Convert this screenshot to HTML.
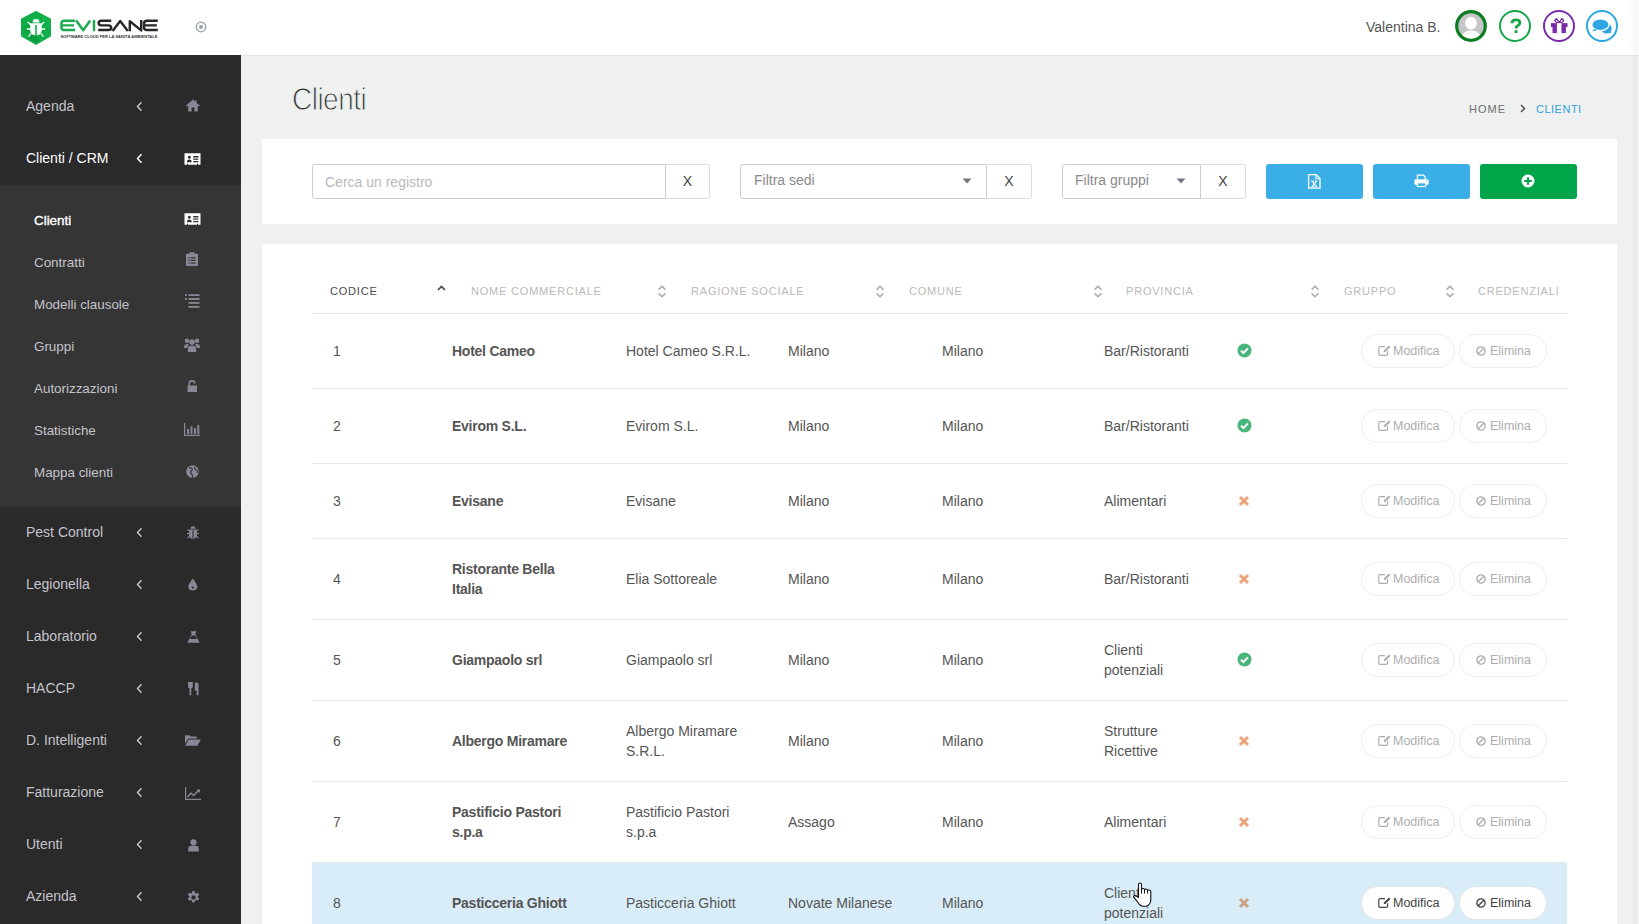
<!DOCTYPE html>
<html><head><meta charset="utf-8">
<style>
*{margin:0;padding:0;box-sizing:border-box}
html,body{width:1639px;height:924px;overflow:hidden;background:#eff1f0;font-family:"Liberation Sans",sans-serif;position:relative}
.abs{position:absolute}
#hdr{position:absolute;left:0;top:0;width:1639px;height:55px;background:#fff}
#side{position:absolute;left:0;top:55px;width:241px;height:869px;background:#2a2a2a}
#sub{position:absolute;left:0;top:185px;width:241px;height:322px;background:#353535}
.mi{position:absolute;left:26px;font-size:14px;color:#c4c3cc;line-height:20px;white-space:nowrap}
.si{position:absolute;left:34px;font-size:13.4px;color:#c4c3cc;line-height:20px;white-space:nowrap}
.panel{position:absolute;background:#fff}
.th{position:absolute;font-size:11px;letter-spacing:0.8px;color:#b9b9b9;line-height:16px;white-space:nowrap}
.td{position:absolute;font-size:14px;color:#555;line-height:20px;white-space:nowrap}
.b{font-weight:bold;color:#555;letter-spacing:-0.25px}
.rl{position:absolute;left:312px;width:1255px;height:1px;background:#e8e8e8}
.btnr{position:absolute;height:34px;border:1px solid #eeeeee;border-radius:17px;font-size:12.5px;color:#adadad;line-height:32px;white-space:nowrap;background:#fff}
.inp{position:absolute;border:1px solid #ccc;background:#fff}
.xb{position:absolute;border:1px solid #ddd;border-left:0;background:#fff;border-radius:0 3px 3px 0;font-size:14px;color:#444;text-align:center;line-height:33px}
.pb{position:absolute;top:164px;height:35px;width:97px;border-radius:3px}
</style></head><body>

<div id="hdr"></div>
<svg class="abs" style="left:0;top:0;width:60px;height:50px" viewBox="0 0 60 50"><path d="M36 12.6L49.5 19.6V35.4L36 43.2L22.5 35.4V19.6z" fill="#10ae48" stroke="#10ae48" stroke-width="3" stroke-linejoin="round"/><path d="M22 28L31 20L36 25L28 34z" fill="#089a3a" opacity=".55"/><path d="M28 38L34 33L40 40L36 43.5z" fill="#07913a" opacity=".6"/><path d="M40 14L50 20V27L44 22z" fill="#15b850" opacity=".5"/><g fill="#fff"><path d="M32.6 22.4A3.45 3.45 0 0 1 39.5 22.4z"/><path d="M30.2 23.3H41.7V30Q41.7 35.3 36 35.3Q30.2 35.3 30.2 30z"/></g><rect x="35.2" y="25" width="1.6" height="10.3" fill="#10ae48"/><path d="M27.8 22L31 25.2M44.2 22L41 25.2M26.8 29H30.8M45.2 29H41.2M28.5 36.6L31.2 33.4M43.5 36.6L40.8 33.4" stroke="#fff" stroke-width="1.3"/></svg>
<svg class="abs" style="left:0;top:0;width:170px;height:45px" viewBox="0 0 170 45" fill="none" stroke-width="2.4" stroke-linejoin="round"><g stroke="#1aa94c"><path d="M75.2 20.8H64.2Q61.4 20.8 61.4 23.6V27.2Q61.4 30 64.2 30H75.2M62.2 25.4H74.2"/><path d="M76.2 20.5L83.2 30.2L90.2 20.5"/><path d="M94 20V31.2"/></g><g stroke="#262626"><path d="M111.2 20.8H101.4Q98.6 20.8 98.6 23.1Q98.6 25.4 101.4 25.4H108.4Q111.2 25.4 111.2 27.7Q111.2 30 108.4 30H98.2"/><path d="M112.6 31L120.2 21L127.8 31"/><path d="M129.8 31.2V21.2L141.2 30.4V20"/><path d="M157.8 20.8H146.8Q144 20.8 144 23.6V27.2Q144 30 146.8 30H157.8M144.8 25.4H156.8"/></g><text x="60.4" y="37.9" font-family="Liberation Sans" font-weight="bold" font-size="4.2" fill="#333" stroke="none" textLength="97" lengthAdjust="spacingAndGlyphs">SOFTWARE CLOUD PER LA SANITÀ AMBIENTALE</text></svg>
<svg class="abs" style="left:195px;top:21px;width:12px;height:12px" viewBox="0 0 12 12"><circle cx="6" cy="6" r="4.8" fill="none" stroke="#9aa0a8" stroke-width="1.3"/><circle cx="6" cy="6" r="2" fill="#9aa0a8"/></svg>
<div class="abs" style="left:1366px;top:18px;font-size:14px;color:#555;line-height:18px;white-space:nowrap">Valentina B.</div>
<svg class="abs" style="left:1455px;top:10px;width:32px;height:32px" viewBox="0 0 32 32"><clipPath id="avc"><circle cx="16" cy="16" r="14"/></clipPath><circle cx="16" cy="16" r="14.5" fill="#c6c6ca"/><g clip-path="url(#avc)" fill="#fff"><ellipse cx="16" cy="13.2" rx="5.9" ry="6.4"/><ellipse cx="16" cy="29" rx="10.5" ry="8.5"/></g><circle cx="16" cy="16" r="14.3" fill="none" stroke="#0a7d1f" stroke-width="3.2"/></svg>
<svg class="abs" style="left:1499px;top:10px;width:32px;height:32px" viewBox="0 0 32 32"><circle cx="16" cy="16" r="15" fill="none" stroke="#17a64a" stroke-width="2"/><path d="M12.9 13.2Q12.9 9.9 16.9 9.9Q20.8 9.9 20.8 12.8Q20.8 14.7 18.7 15.8Q17.1 16.6 17.1 18.6" fill="none" stroke="#17a64a" stroke-width="2.9"/><rect x="15.6" y="20.2" width="2.9" height="2.8" fill="#17a64a"/></svg>
<svg class="abs" style="left:1543px;top:10px;width:32px;height:32px" viewBox="0 0 32 32"><circle cx="16" cy="16" r="15" fill="none" stroke="#7a2ca8" stroke-width="2"/><g fill="#7a2ca8"><rect x="8" y="13.1" width="16.5" height="3.9"/><rect x="9.5" y="17" width="13.4" height="6.1"/></g><path d="M16.2 12.6L13.6 8.6L11.6 10.4L13.6 12.6z M16.2 12.6L18.8 8.6L20.8 10.4L18.8 12.6z" fill="none" stroke="#7a2ca8" stroke-width="1.3" stroke-linejoin="round"/><rect x="13.9" y="13.1" width="4.6" height="10" fill="#fff"/></svg>
<svg class="abs" style="left:1586px;top:10px;width:32px;height:32px" viewBox="0 0 32 32"><circle cx="16" cy="16" r="15" fill="none" stroke="#2ea6e2" stroke-width="2"/><g fill="#2ea6e2"><ellipse cx="20.5" cy="18.6" rx="5.2" ry="5"/><path d="M22 22l3.6 1.8-1.8-3.5z"/><ellipse cx="14.4" cy="14.7" rx="8.6" ry="5.9" stroke="#fff" stroke-width="1.3"/><path d="M8.4 18.8L6.2 21.4L11.4 19.9z"/></g></svg>
<div id="side"></div><div id="sub"></div>
<div class="mi" style="top:96px;color:#c4c3cc">Agenda</div>
<svg class="abs" style="left:135px;top:101px;width:9px;height:11px" viewBox="0 0 9 11"><path d="M6.5 1.2L2.5 5.5l4 4.3" fill="none" stroke="#c4c3cc" stroke-width="1.5"/></svg>
<div class="mi" style="top:148px;color:#ffffff">Clienti / CRM</div>
<svg class="abs" style="left:135px;top:153px;width:9px;height:11px" viewBox="0 0 9 11"><path d="M6.5 1.2L2.5 5.5l4 4.3" fill="none" stroke="#ffffff" stroke-width="1.5"/></svg>
<div class="mi" style="top:522px">Pest Control</div>
<svg class="abs" style="left:135px;top:527px;width:9px;height:11px" viewBox="0 0 9 11"><path d="M6.5 1.2L2.5 5.5l4 4.3" fill="none" stroke="#c4c3cc" stroke-width="1.5"/></svg>
<div class="mi" style="top:574px">Legionella</div>
<svg class="abs" style="left:135px;top:579px;width:9px;height:11px" viewBox="0 0 9 11"><path d="M6.5 1.2L2.5 5.5l4 4.3" fill="none" stroke="#c4c3cc" stroke-width="1.5"/></svg>
<div class="mi" style="top:626px">Laboratorio</div>
<svg class="abs" style="left:135px;top:631px;width:9px;height:11px" viewBox="0 0 9 11"><path d="M6.5 1.2L2.5 5.5l4 4.3" fill="none" stroke="#c4c3cc" stroke-width="1.5"/></svg>
<div class="mi" style="top:678px">HACCP</div>
<svg class="abs" style="left:135px;top:683px;width:9px;height:11px" viewBox="0 0 9 11"><path d="M6.5 1.2L2.5 5.5l4 4.3" fill="none" stroke="#c4c3cc" stroke-width="1.5"/></svg>
<div class="mi" style="top:730px">D. Intelligenti</div>
<svg class="abs" style="left:135px;top:735px;width:9px;height:11px" viewBox="0 0 9 11"><path d="M6.5 1.2L2.5 5.5l4 4.3" fill="none" stroke="#c4c3cc" stroke-width="1.5"/></svg>
<div class="mi" style="top:782px">Fatturazione</div>
<svg class="abs" style="left:135px;top:787px;width:9px;height:11px" viewBox="0 0 9 11"><path d="M6.5 1.2L2.5 5.5l4 4.3" fill="none" stroke="#c4c3cc" stroke-width="1.5"/></svg>
<div class="mi" style="top:834px">Utenti</div>
<svg class="abs" style="left:135px;top:839px;width:9px;height:11px" viewBox="0 0 9 11"><path d="M6.5 1.2L2.5 5.5l4 4.3" fill="none" stroke="#c4c3cc" stroke-width="1.5"/></svg>
<div class="mi" style="top:886px">Azienda</div>
<svg class="abs" style="left:135px;top:891px;width:9px;height:11px" viewBox="0 0 9 11"><path d="M6.5 1.2L2.5 5.5l4 4.3" fill="none" stroke="#c4c3cc" stroke-width="1.5"/></svg>
<div class="si" style="top:211px;color:#ffffff;font-weight:normal;-webkit-text-stroke:0.35px #fff">Clienti</div>
<div class="si" style="top:253px;color:#c4c3cc;font-weight:normal">Contratti</div>
<div class="si" style="top:295px;color:#c4c3cc;font-weight:normal">Modelli clausole</div>
<div class="si" style="top:337px;color:#c4c3cc;font-weight:normal">Gruppi</div>
<div class="si" style="top:379px;color:#c4c3cc;font-weight:normal">Autorizzazioni</div>
<div class="si" style="top:421px;color:#c4c3cc;font-weight:normal">Statistiche</div>
<div class="si" style="top:463px;color:#c4c3cc;font-weight:normal">Mappa clienti</div>
<svg class="abs" style="left:186px;top:99px;width:14px;height:13px" viewBox="0 0 14 13" fill="#8a8794"><path d="M7 0.5L0 6.6l0.9 1L2.2 6.5V12.5H5.6V8.6h2.8v3.9h3.4V6.5l1.3 1.1 0.9-1L10.6 3.9V1.2H9.2v1.5z"/></svg>
<svg class="abs" style="left:184px;top:153px;width:17px;height:12px" viewBox="0 0 17 12" fill="#ffffff"><path fill-rule="evenodd" d="M0.5 0.3h16v11.4h-16z M3 9.3h4.6V8.2Q7.6 6.5 5.3 6.5Q3 6.5 3 8.2z M5.3 2.8a1.5 1.5 0 1 0 0.01 0z M9.2 3.1h5.2v1.3H9.2z M9.2 5.5h5.2v1.3H9.2z M9.2 7.9h5.2v1.3H9.2z M3 11.7h1v-1h-1z M13 11.7h1v-1h-1z"/></svg>
<svg class="abs" style="left:184px;top:213px;width:17px;height:12px" viewBox="0 0 17 12" fill="#ffffff"><path fill-rule="evenodd" d="M0.5 0.3h16v11.4h-16z M3 9.3h4.6V8.2Q7.6 6.5 5.3 6.5Q3 6.5 3 8.2z M5.3 2.8a1.5 1.5 0 1 0 0.01 0z M9.2 3.1h5.2v1.3H9.2z M9.2 5.5h5.2v1.3H9.2z M9.2 7.9h5.2v1.3H9.2z M3 11.7h1v-1h-1z M13 11.7h1v-1h-1z"/></svg>
<svg class="abs" style="left:186px;top:252px;width:12px;height:14px" viewBox="0 0 12 14" fill="#8a8794"><path fill-rule="evenodd" d="M0 1.8h3.6V0.3h4.8v1.5H12V14H0z M2.4 5.2h1.3v1.3H2.4z M4.8 5.2h4.8v1.3H4.8z M2.4 7.8h1.3v1.3H2.4z M4.8 7.8h4.8v1.3H4.8z M2.4 10.4h1.3v1.3H2.4z M4.8 10.4h4.8v1.3H4.8z"/></svg>
<svg class="abs" style="left:185px;top:294px;width:15px;height:14px" viewBox="0 0 15 14" fill="#8a8794"><path d="M0 0.3h1.8v1.8H0z M3.5 0.3h11v1.8h-11z M0 4.1h1.8v1.8H0z M3.5 4.1h11v1.8h-11z M3.5 8h11v1.8h-11z M3.5 11.9h11v1.8h-11z"/></svg>
<svg class="abs" style="left:184px;top:338px;width:16px;height:14px" viewBox="0 0 16 14" fill="#8a8794"><circle cx="3" cy="2.8" r="2.2"/><circle cx="13" cy="2.8" r="2.2"/><circle cx="8" cy="4" r="2.8"/><path d="M0 9.5Q0 6 3 6Q4.5 6 5 6.8Q3.5 8 3.5 10H0z M16 9.5Q16 6 13 6Q11.5 6 11 6.8Q12.5 8 12.5 10H16z M3.8 14V11.5Q3.8 7.5 8 7.5Q12.2 7.5 12.2 11.5V14z"/></svg>
<svg class="abs" style="left:187px;top:380px;width:11px;height:12px" viewBox="0 0 11 12" fill="#8a8794"><path d="M0.5 5.5h9.5v6.5H0.5z"/><path d="M2.3 5.8V3.4Q2.3 0.9 5 0.9Q7.7 0.9 7.7 3.4" fill="none" stroke="#8a8794" stroke-width="1.6"/></svg>
<svg class="abs" style="left:184px;top:423px;width:16px;height:13px" viewBox="0 0 16 13" fill="#8a8794"><path d="M0 0h1.2v11.8H16V13H0z M3 6h2v5H3z M6.5 3.5h2V11h-2z M10 5h2v6h-2z M13.3 2h2v9h-2z"/></svg>
<svg class="abs" style="left:186px;top:465px;width:13px;height:13px" viewBox="0 0 13 13" fill="#8a8794"><circle cx="6.5" cy="6.5" r="6.3"/><path d="M3 3Q5 2 6 4Q7 5 5 6Q4 8 6 9.5L7 12.5 M9 2Q8 4 10 5Q12 5.5 11.5 8" fill="none" stroke="#353535" stroke-width="1.2"/></svg>
<svg class="abs" style="left:187px;top:526px;width:12px;height:13px" viewBox="0 0 12 13" fill="#8a8794"><path d="M3.5 2.8Q3.5 0.3 6 0.3Q8.5 0.3 8.5 2.8z M2.8 3.6h6.4Q10 4.4 10 6.5V9Q10 12.8 6 12.8Q2 12.8 2 9V6.5Q2 4.4 2.8 3.6z"/><path d="M0.5 3.5L2.5 5 M11.5 3.5L9.5 5 M0 7.5H2 M12 7.5H10 M0.5 12L2.5 10.3 M11.5 12L9.5 10.3" stroke="#8a8794" stroke-width="1.1"/><path d="M6 4.2V12.3" stroke="#2a2a2a" stroke-width="1"/></svg>
<svg class="abs" style="left:188px;top:578px;width:10px;height:13px" viewBox="0 0 10 13" fill="#8a8794"><path d="M4.8 0.5Q9.3 6.5 9.3 8.3Q9.3 12.5 4.8 12.5Q0.3 12.5 0.3 8.3Q0.3 6.5 4.8 0.5z"/><circle cx="4.8" cy="9.6" r="1.1" fill="#2a2a2a"/></svg>
<svg class="abs" style="left:187px;top:631px;width:13px;height:12px" viewBox="0 0 13 12" fill="#8a8794"><path d="M3.6 0.2h5.8v1.2h-0.9v2.4L12.7 11.8H0.3L4.5 3.8V1.4h-0.9z"/><path d="M4.8 4.5L2.8 8H10.2L8.2 4.5z" fill="#2a2a2a"/></svg>
<svg class="abs" style="left:188px;top:682px;width:11px;height:14px" viewBox="0 0 11 14" fill="#8a8794"><path d="M0 0h4.8v4.6Q4.8 6 3.3 6.4V13.3H1.5V6.4Q0 6 0 4.6z M6.8 0.5Q9.8 0.5 10.5 1.5V13.3H8.6V8.6H6.8z"/></svg>
<svg class="abs" style="left:185px;top:735px;width:16px;height:11px" viewBox="0 0 16 11" fill="#8a8794"><path d="M0 0.3h4.6l1.3 1.3h5.8v1.8H3.2L0 8.8z M3.6 4.4H15.8L12.4 10.8H0.3z"/></svg>
<svg class="abs" style="left:185px;top:787px;width:16px;height:13px" viewBox="0 0 16 13" fill="#8a8794"><path d="M0 0h1.2v11.8H16V13H0z"/><path d="M2.5 10L6 6L8.5 8.5L13.5 3.5" fill="none" stroke="#8a8794" stroke-width="1.5"/><path d="M11.5 2.5H15V6z"/></svg>
<svg class="abs" style="left:188px;top:839px;width:11px;height:13px" viewBox="0 0 11 13" fill="#8a8794"><circle cx="5.5" cy="3.3" r="3.1"/><path d="M0.2 12.6V10Q0.2 6.8 3.3 6.8H7.7Q10.8 6.8 10.8 10V12.6z"/></svg>
<svg class="abs" style="left:187px;top:891px;width:13px;height:13px" viewBox="0 0 13 13" fill="#8a8794"><path fill-rule="evenodd" d="M5.3 0h2.4l0.4 1.9 1.1 0.6 1.8-0.7 1.2 2.1-1.4 1.2v1.3l1.4 1.2-1.2 2.1-1.8-0.7-1.1 0.6-0.4 1.9H5.3l-0.4-1.9-1.1-0.6-1.8 0.7-1.2-2.1 1.4-1.2V5.1L0.8 3.9 2 1.8l1.8 0.7 1.1-0.6z M6.5 4.3a2.2 2.2 0 1 0 0.01 0z"/></svg>
<div class="abs" style="left:292px;top:81px;font-size:32px;color:#333;line-height:36px;letter-spacing:-0.6px;white-space:nowrap;-webkit-text-stroke:1px #eff1f0;transform:scaleX(0.875);transform-origin:0 0">Clienti</div>
<div class="abs" style="left:1469px;top:102px;font-size:11px;color:#6e6e6e;letter-spacing:1px;line-height:14px;white-space:nowrap">HOME</div>
<svg class="abs" style="left:1519px;top:104px;width:8px;height:9px" viewBox="0 0 8 9"><path d="M2 1l3.5 3.5L2 8" fill="none" stroke="#555" stroke-width="1.6"/></svg>
<div class="abs" style="left:1536px;top:102px;font-size:11px;color:#2f9fe0;letter-spacing:0.5px;line-height:14px;white-space:nowrap">CLIENTI</div>
<div class="panel" style="left:262px;top:139px;width:1355px;height:85px"></div>
<div class="inp" style="left:312px;top:164px;width:354px;height:35px;border-radius:3px 0 0 3px"></div>
<div class="abs" style="left:325px;top:173px;font-size:14px;color:#b9b9b9;line-height:18px;white-space:nowrap">Cerca un registro</div>
<div class="xb" style="left:666px;top:164px;width:44px;height:35px">X</div>
<div class="inp" style="left:740px;top:164px;width:247px;height:35px;border-radius:3px 0 0 3px"></div>
<div class="abs" style="left:754px;top:171px;font-size:14px;color:#8a8a8a;line-height:18px;white-space:nowrap">Filtra sedi</div>
<svg class="abs" style="left:962px;top:178px;width:10px;height:6px" viewBox="0 0 10 6"><path d="M0.5 0.5h9L5 5.5z" fill="#76737f"/></svg>
<div class="xb" style="left:987px;top:164px;width:45px;height:35px">X</div>
<div class="inp" style="left:1062px;top:164px;width:139px;height:35px;border-radius:3px 0 0 3px"></div>
<div class="abs" style="left:1075px;top:171px;font-size:14px;color:#8a8a8a;line-height:18px;white-space:nowrap">Filtra gruppi</div>
<svg class="abs" style="left:1176px;top:178px;width:10px;height:6px" viewBox="0 0 10 6"><path d="M0.5 0.5h9L5 5.5z" fill="#76737f"/></svg>
<div class="xb" style="left:1201px;top:164px;width:45px;height:35px">X</div>
<div class="pb" style="left:1266px;background:#3aaee6"></div>
<svg class="abs" style="left:1307px;top:174px;width:15px;height:15px" viewBox="0 0 15 15"><path d="M1.6 0.7h7.6l3.8 3.8v9.6H1.6z" fill="none" stroke="#fff" stroke-width="1.3"/><path d="M9 0.7v4h4" fill="none" stroke="#fff" stroke-width="1.1"/><path d="M4.2 6.6h2.6v0.9h-0.6l1.1 1.6 1.1-1.6h-0.6V6.6h2.5v0.9h-0.6L8.1 10l1.7 2.3h0.6v0.9H7.8v-0.9h0.5l-1-1.5-1 1.5h0.5v0.9H4.2v-0.9h0.6L6.5 10 4.8 7.5H4.2z" fill="#fff"/></svg>
<div class="pb" style="left:1373px;background:#3aaee6"></div>
<svg class="abs" style="left:1414px;top:174px;width:15px;height:14px" viewBox="0 0 15 14"><path d="M3.4 5.2V1.1H9.4L11.1 2.8V5.2" fill="none" stroke="#fff" stroke-width="1.2"/><rect x="0.4" y="5.2" width="14.2" height="5.6" rx="1.2" fill="#fff"/><rect x="3.4" y="8.8" width="8.2" height="3.7" fill="#3aaee6" stroke="#fff" stroke-width="1.2"/><circle cx="12.6" cy="6.8" r="0.6" fill="#3aaee6"/></svg>
<div class="pb" style="left:1480px;background:#00a549"></div>
<svg class="abs" style="left:1521px;top:174px;width:14px;height:14px" viewBox="0 0 14 14"><circle cx="7" cy="7" r="6.5" fill="#fff"/><path d="M6 3.2h2v2.8h2.8v2H8v2.8H6V8H3.2V6H6z" fill="#00a549"/></svg>
<div class="panel" style="left:262px;top:244px;width:1355px;height:700px"></div>
<div class="th" style="left:330px;top:283px;color:#4a4a4a">CODICE</div>
<div class="th" style="left:471px;top:283px">NOME COMMERCIALE</div>
<div class="th" style="left:691px;top:283px">RAGIONE SOCIALE</div>
<div class="th" style="left:909px;top:283px">COMUNE</div>
<div class="th" style="left:1126px;top:283px">PROVINCIA</div>
<div class="th" style="left:1344px;top:283px">GRUPPO</div>
<div class="th" style="left:1478px;top:283px">CREDENZIALI</div>
<svg class="abs" style="left:437px;top:285px;width:9px;height:6px" viewBox="0 0 9 6"><path d="M1 5l3.5-3.5L8 5" fill="none" stroke="#444" stroke-width="1.6"/></svg>
<svg class="abs" style="left:657px;top:285px;width:10px;height:13px" viewBox="0 0 10 13"><path d="M1.6 4.6l3.4-3.3 3.4 3.3 M1.6 8.4l3.4 3.3 3.4-3.3" fill="none" stroke="#aaaaaa" stroke-width="1.5"/></svg>
<svg class="abs" style="left:875px;top:285px;width:10px;height:13px" viewBox="0 0 10 13"><path d="M1.6 4.6l3.4-3.3 3.4 3.3 M1.6 8.4l3.4 3.3 3.4-3.3" fill="none" stroke="#aaaaaa" stroke-width="1.5"/></svg>
<svg class="abs" style="left:1093px;top:285px;width:10px;height:13px" viewBox="0 0 10 13"><path d="M1.6 4.6l3.4-3.3 3.4 3.3 M1.6 8.4l3.4 3.3 3.4-3.3" fill="none" stroke="#aaaaaa" stroke-width="1.5"/></svg>
<svg class="abs" style="left:1310px;top:285px;width:10px;height:13px" viewBox="0 0 10 13"><path d="M1.6 4.6l3.4-3.3 3.4 3.3 M1.6 8.4l3.4 3.3 3.4-3.3" fill="none" stroke="#aaaaaa" stroke-width="1.5"/></svg>
<svg class="abs" style="left:1445px;top:285px;width:10px;height:13px" viewBox="0 0 10 13"><path d="M1.6 4.6l3.4-3.3 3.4 3.3 M1.6 8.4l3.4 3.3 3.4-3.3" fill="none" stroke="#aaaaaa" stroke-width="1.5"/></svg>
<div class="rl" style="top:313px"></div>
<div class="td" style="left:333px;top:341.0px">1</div>
<div class="td b" style="left:452px;top:341.0px">Hotel Cameo</div>
<div class="td" style="left:626px;top:341.0px">Hotel Cameo S.R.L.</div>
<div class="td" style="left:788px;top:341.0px">Milano</div>
<div class="td" style="left:942px;top:341.0px">Milano</div>
<div class="td" style="left:1104px;top:341.0px">Bar/Ristoranti</div>
<svg class="abs" style="left:1237px;top:342.5px;width:15px;height:15px" viewBox="0 0 15 15"><circle cx="7.5" cy="7.5" r="7" fill="#48b57a"/><path d="M4 7.6l2.4 2.4 4.6-4.6" fill="none" stroke="#fff" stroke-width="2"/></svg>
<div class="btnr" style="left:1361px;top:334.0px;width:94px;color:#adadad;border-color:#eeeeee"><svg style="position:absolute;left:16px;top:10px;width:13px;height:11px" viewBox="0 0 13 11"><path d="M7 1.6H2.1Q0.8 1.6 0.8 2.9V9.1Q0.8 10.4 2.1 10.4H8.3Q9.6 10.4 9.6 9.1V6.2" fill="none" stroke="#adadad" stroke-width="1.2"/><path d="M10.9 0.5L12.4 2L7.3 7.1H5.8V5.6z" fill="#adadad"/></svg><span style="position:absolute;left:31px">Modifica</span></div>
<div class="btnr" style="left:1459px;top:334.0px;width:88px;color:#adadad;border-color:#eeeeee"><svg style="position:absolute;left:16px;top:11px;width:10px;height:10px" viewBox="0 0 10 10"><circle cx="5" cy="5" r="4.1" fill="none" stroke="#adadad" stroke-width="1.4"/><path d="M2.2 7.8l5.6-5.6" stroke="#adadad" stroke-width="1.4"/></svg><span style="position:absolute;left:30px">Elimina</span></div>
<div class="rl" style="top:388px"></div>
<div class="td" style="left:333px;top:416.0px">2</div>
<div class="td b" style="left:452px;top:416.0px">Evirom S.L.</div>
<div class="td" style="left:626px;top:416.0px">Evirom S.L.</div>
<div class="td" style="left:788px;top:416.0px">Milano</div>
<div class="td" style="left:942px;top:416.0px">Milano</div>
<div class="td" style="left:1104px;top:416.0px">Bar/Ristoranti</div>
<svg class="abs" style="left:1237px;top:417.5px;width:15px;height:15px" viewBox="0 0 15 15"><circle cx="7.5" cy="7.5" r="7" fill="#48b57a"/><path d="M4 7.6l2.4 2.4 4.6-4.6" fill="none" stroke="#fff" stroke-width="2"/></svg>
<div class="btnr" style="left:1361px;top:409.0px;width:94px;color:#adadad;border-color:#eeeeee"><svg style="position:absolute;left:16px;top:10px;width:13px;height:11px" viewBox="0 0 13 11"><path d="M7 1.6H2.1Q0.8 1.6 0.8 2.9V9.1Q0.8 10.4 2.1 10.4H8.3Q9.6 10.4 9.6 9.1V6.2" fill="none" stroke="#adadad" stroke-width="1.2"/><path d="M10.9 0.5L12.4 2L7.3 7.1H5.8V5.6z" fill="#adadad"/></svg><span style="position:absolute;left:31px">Modifica</span></div>
<div class="btnr" style="left:1459px;top:409.0px;width:88px;color:#adadad;border-color:#eeeeee"><svg style="position:absolute;left:16px;top:11px;width:10px;height:10px" viewBox="0 0 10 10"><circle cx="5" cy="5" r="4.1" fill="none" stroke="#adadad" stroke-width="1.4"/><path d="M2.2 7.8l5.6-5.6" stroke="#adadad" stroke-width="1.4"/></svg><span style="position:absolute;left:30px">Elimina</span></div>
<div class="rl" style="top:463px"></div>
<div class="td" style="left:333px;top:491.0px">3</div>
<div class="td b" style="left:452px;top:491.0px">Evisane</div>
<div class="td" style="left:626px;top:491.0px">Evisane</div>
<div class="td" style="left:788px;top:491.0px">Milano</div>
<div class="td" style="left:942px;top:491.0px">Milano</div>
<div class="td" style="left:1104px;top:491.0px">Alimentari</div>
<svg class="abs" style="left:1238px;top:495.0px;width:12px;height:12px" viewBox="0 0 12 12"><path d="M2 2l8 8 M10 2l-8 8" stroke="#e9a47c" stroke-width="3"/></svg>
<div class="btnr" style="left:1361px;top:484.0px;width:94px;color:#adadad;border-color:#eeeeee"><svg style="position:absolute;left:16px;top:10px;width:13px;height:11px" viewBox="0 0 13 11"><path d="M7 1.6H2.1Q0.8 1.6 0.8 2.9V9.1Q0.8 10.4 2.1 10.4H8.3Q9.6 10.4 9.6 9.1V6.2" fill="none" stroke="#adadad" stroke-width="1.2"/><path d="M10.9 0.5L12.4 2L7.3 7.1H5.8V5.6z" fill="#adadad"/></svg><span style="position:absolute;left:31px">Modifica</span></div>
<div class="btnr" style="left:1459px;top:484.0px;width:88px;color:#adadad;border-color:#eeeeee"><svg style="position:absolute;left:16px;top:11px;width:10px;height:10px" viewBox="0 0 10 10"><circle cx="5" cy="5" r="4.1" fill="none" stroke="#adadad" stroke-width="1.4"/><path d="M2.2 7.8l5.6-5.6" stroke="#adadad" stroke-width="1.4"/></svg><span style="position:absolute;left:30px">Elimina</span></div>
<div class="rl" style="top:538px"></div>
<div class="td" style="left:333px;top:569.0px">4</div>
<div class="td b" style="left:452px;top:559.0px">Ristorante Bella<br>Italia</div>
<div class="td" style="left:626px;top:569.0px">Elia Sottoreale</div>
<div class="td" style="left:788px;top:569.0px">Milano</div>
<div class="td" style="left:942px;top:569.0px">Milano</div>
<div class="td" style="left:1104px;top:569.0px">Bar/Ristoranti</div>
<svg class="abs" style="left:1238px;top:573.0px;width:12px;height:12px" viewBox="0 0 12 12"><path d="M2 2l8 8 M10 2l-8 8" stroke="#e9a47c" stroke-width="3"/></svg>
<div class="btnr" style="left:1361px;top:562.0px;width:94px;color:#adadad;border-color:#eeeeee"><svg style="position:absolute;left:16px;top:10px;width:13px;height:11px" viewBox="0 0 13 11"><path d="M7 1.6H2.1Q0.8 1.6 0.8 2.9V9.1Q0.8 10.4 2.1 10.4H8.3Q9.6 10.4 9.6 9.1V6.2" fill="none" stroke="#adadad" stroke-width="1.2"/><path d="M10.9 0.5L12.4 2L7.3 7.1H5.8V5.6z" fill="#adadad"/></svg><span style="position:absolute;left:31px">Modifica</span></div>
<div class="btnr" style="left:1459px;top:562.0px;width:88px;color:#adadad;border-color:#eeeeee"><svg style="position:absolute;left:16px;top:11px;width:10px;height:10px" viewBox="0 0 10 10"><circle cx="5" cy="5" r="4.1" fill="none" stroke="#adadad" stroke-width="1.4"/><path d="M2.2 7.8l5.6-5.6" stroke="#adadad" stroke-width="1.4"/></svg><span style="position:absolute;left:30px">Elimina</span></div>
<div class="rl" style="top:619px"></div>
<div class="td" style="left:333px;top:650.0px">5</div>
<div class="td b" style="left:452px;top:650.0px">Giampaolo srl</div>
<div class="td" style="left:626px;top:650.0px">Giampaolo srl</div>
<div class="td" style="left:788px;top:650.0px">Milano</div>
<div class="td" style="left:942px;top:650.0px">Milano</div>
<div class="td" style="left:1104px;top:640.0px">Clienti<br>potenziali</div>
<svg class="abs" style="left:1237px;top:651.5px;width:15px;height:15px" viewBox="0 0 15 15"><circle cx="7.5" cy="7.5" r="7" fill="#48b57a"/><path d="M4 7.6l2.4 2.4 4.6-4.6" fill="none" stroke="#fff" stroke-width="2"/></svg>
<div class="btnr" style="left:1361px;top:643.0px;width:94px;color:#adadad;border-color:#eeeeee"><svg style="position:absolute;left:16px;top:10px;width:13px;height:11px" viewBox="0 0 13 11"><path d="M7 1.6H2.1Q0.8 1.6 0.8 2.9V9.1Q0.8 10.4 2.1 10.4H8.3Q9.6 10.4 9.6 9.1V6.2" fill="none" stroke="#adadad" stroke-width="1.2"/><path d="M10.9 0.5L12.4 2L7.3 7.1H5.8V5.6z" fill="#adadad"/></svg><span style="position:absolute;left:31px">Modifica</span></div>
<div class="btnr" style="left:1459px;top:643.0px;width:88px;color:#adadad;border-color:#eeeeee"><svg style="position:absolute;left:16px;top:11px;width:10px;height:10px" viewBox="0 0 10 10"><circle cx="5" cy="5" r="4.1" fill="none" stroke="#adadad" stroke-width="1.4"/><path d="M2.2 7.8l5.6-5.6" stroke="#adadad" stroke-width="1.4"/></svg><span style="position:absolute;left:30px">Elimina</span></div>
<div class="rl" style="top:700px"></div>
<div class="td" style="left:333px;top:731.0px">6</div>
<div class="td b" style="left:452px;top:731.0px">Albergo Miramare</div>
<div class="td" style="left:626px;top:721.0px">Albergo Miramare<br>S.R.L.</div>
<div class="td" style="left:788px;top:731.0px">Milano</div>
<div class="td" style="left:942px;top:731.0px">Milano</div>
<div class="td" style="left:1104px;top:721.0px">Strutture<br>Ricettive</div>
<svg class="abs" style="left:1238px;top:735.0px;width:12px;height:12px" viewBox="0 0 12 12"><path d="M2 2l8 8 M10 2l-8 8" stroke="#e9a47c" stroke-width="3"/></svg>
<div class="btnr" style="left:1361px;top:724.0px;width:94px;color:#adadad;border-color:#eeeeee"><svg style="position:absolute;left:16px;top:10px;width:13px;height:11px" viewBox="0 0 13 11"><path d="M7 1.6H2.1Q0.8 1.6 0.8 2.9V9.1Q0.8 10.4 2.1 10.4H8.3Q9.6 10.4 9.6 9.1V6.2" fill="none" stroke="#adadad" stroke-width="1.2"/><path d="M10.9 0.5L12.4 2L7.3 7.1H5.8V5.6z" fill="#adadad"/></svg><span style="position:absolute;left:31px">Modifica</span></div>
<div class="btnr" style="left:1459px;top:724.0px;width:88px;color:#adadad;border-color:#eeeeee"><svg style="position:absolute;left:16px;top:11px;width:10px;height:10px" viewBox="0 0 10 10"><circle cx="5" cy="5" r="4.1" fill="none" stroke="#adadad" stroke-width="1.4"/><path d="M2.2 7.8l5.6-5.6" stroke="#adadad" stroke-width="1.4"/></svg><span style="position:absolute;left:30px">Elimina</span></div>
<div class="rl" style="top:781px"></div>
<div class="td" style="left:333px;top:812.0px">7</div>
<div class="td b" style="left:452px;top:802.0px">Pastificio Pastori<br>s.p.a</div>
<div class="td" style="left:626px;top:802.0px">Pastificio Pastori<br>s.p.a</div>
<div class="td" style="left:788px;top:812.0px">Assago</div>
<div class="td" style="left:942px;top:812.0px">Milano</div>
<div class="td" style="left:1104px;top:812.0px">Alimentari</div>
<svg class="abs" style="left:1238px;top:816.0px;width:12px;height:12px" viewBox="0 0 12 12"><path d="M2 2l8 8 M10 2l-8 8" stroke="#e9a47c" stroke-width="3"/></svg>
<div class="btnr" style="left:1361px;top:805.0px;width:94px;color:#adadad;border-color:#eeeeee"><svg style="position:absolute;left:16px;top:10px;width:13px;height:11px" viewBox="0 0 13 11"><path d="M7 1.6H2.1Q0.8 1.6 0.8 2.9V9.1Q0.8 10.4 2.1 10.4H8.3Q9.6 10.4 9.6 9.1V6.2" fill="none" stroke="#adadad" stroke-width="1.2"/><path d="M10.9 0.5L12.4 2L7.3 7.1H5.8V5.6z" fill="#adadad"/></svg><span style="position:absolute;left:31px">Modifica</span></div>
<div class="btnr" style="left:1459px;top:805.0px;width:88px;color:#adadad;border-color:#eeeeee"><svg style="position:absolute;left:16px;top:11px;width:10px;height:10px" viewBox="0 0 10 10"><circle cx="5" cy="5" r="4.1" fill="none" stroke="#adadad" stroke-width="1.4"/><path d="M2.2 7.8l5.6-5.6" stroke="#adadad" stroke-width="1.4"/></svg><span style="position:absolute;left:30px">Elimina</span></div>
<div class="rl" style="top:862px"></div>
<div class="abs" style="left:312px;top:863px;width:1255px;height:81px;background:#d9edf8"></div>
<div class="td" style="left:333px;top:893.0px">8</div>
<div class="td b" style="left:452px;top:893.0px">Pasticceria Ghiott</div>
<div class="td" style="left:626px;top:893.0px">Pasticceria Ghiott</div>
<div class="td" style="left:788px;top:893.0px">Novate Milanese</div>
<div class="td" style="left:942px;top:893.0px">Milano</div>
<div class="td" style="left:1104px;top:883.0px">Clienti<br>potenziali</div>
<svg class="abs" style="left:1238px;top:897.0px;width:12px;height:12px" viewBox="0 0 12 12"><path d="M2 2l8 8 M10 2l-8 8" stroke="#c9a384" stroke-width="3"/></svg>
<div class="btnr" style="left:1361px;top:886.0px;width:94px;color:#444;border-color:#e2e6e8"><svg style="position:absolute;left:16px;top:10px;width:13px;height:11px" viewBox="0 0 13 11"><path d="M7 1.6H2.1Q0.8 1.6 0.8 2.9V9.1Q0.8 10.4 2.1 10.4H8.3Q9.6 10.4 9.6 9.1V6.2" fill="none" stroke="#444" stroke-width="1.2"/><path d="M10.9 0.5L12.4 2L7.3 7.1H5.8V5.6z" fill="#444"/></svg><span style="position:absolute;left:31px">Modifica</span></div>
<div class="btnr" style="left:1459px;top:886.0px;width:88px;color:#444;border-color:#e2e6e8"><svg style="position:absolute;left:16px;top:11px;width:10px;height:10px" viewBox="0 0 10 10"><circle cx="5" cy="5" r="4.1" fill="none" stroke="#444" stroke-width="1.4"/><path d="M2.2 7.8l5.6-5.6" stroke="#444" stroke-width="1.4"/></svg><span style="position:absolute;left:30px">Elimina</span></div>
<div class="rl" style="top:943px"></div>
<svg class="abs" style="left:1125px;top:875px;width:32px;height:36px" viewBox="0 0 32 36"><path d="M13.5 21.5V9.5Q13.5 8 15 8Q16.5 8 16.5 9.5V14.5Q16.5 13.5 18 13.5Q19.5 13.5 19.5 15Q19.5 14 21 14Q22.5 14 22.5 15.5Q22.5 15 24 15Q25.8 15 25.8 16.5V25Q25.8 28 23.5 30L21.5 31.2H17.5Q16 31 14.5 29.5L8.6 21.8Q8.4 20.6 10 20.6Q11.5 20.8 13.5 22.5Z" fill="#fff" stroke="#111" stroke-width="1.1" stroke-linejoin="round"/><path d="M16.5 14.5V18.5M19.5 15V18.5M22.5 15.5V18.5" stroke="#111" stroke-width="1"/></svg>
<div class="abs" style="left:1629px;top:0;width:10px;height:924px;background:linear-gradient(to right,rgba(0,0,0,0),rgba(0,0,0,0.03) 80%,rgba(255,255,255,0.5))"></div>
<div class="abs" style="left:241px;top:55px;width:1398px;height:1px;background:rgba(0,0,0,0.04)"></div>
</body></html>
